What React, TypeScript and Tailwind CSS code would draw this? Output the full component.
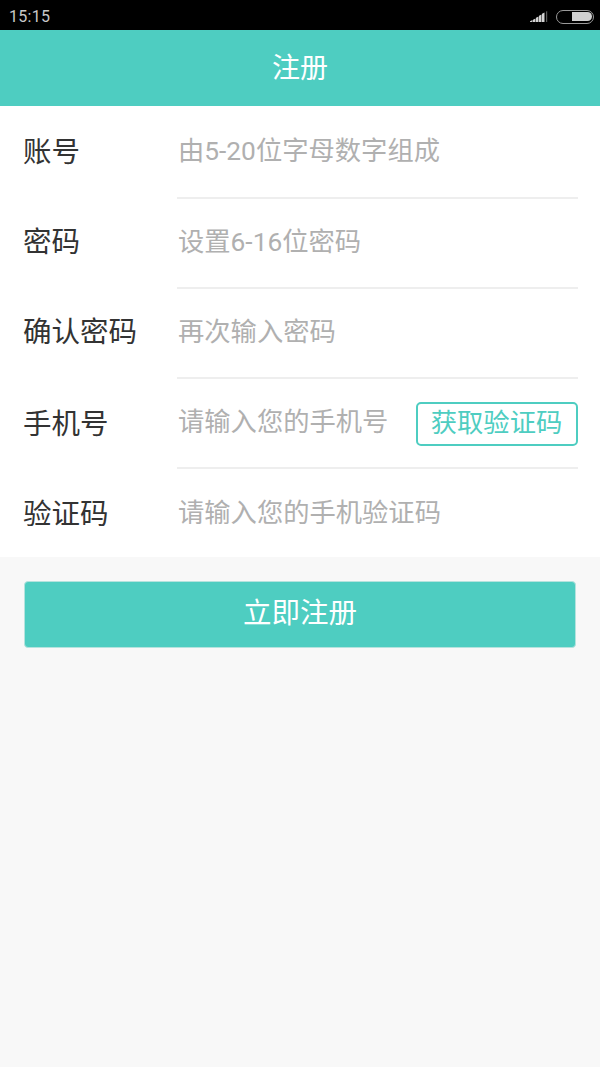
const font = "font-['Roboto','Noto_Sans_CJK_SC',sans-serif]";

const rows = [
  { label: '账号', labelClass: 'pt-[2px]', placeholder: '由5-20位字母数字组成', placeholderClass: '' },
  { label: '密码', labelClass: 'mb-[2px]', placeholder: '设置6-16位密码', placeholderClass: 'mb-[2px]' },
  { label: '确认密码', labelClass: 'mb-[2px]', placeholder: '再次输入密码', placeholderClass: 'mb-[2px]' },
  { label: '手机号', labelClass: 'pt-[2px]', placeholder: '请输入您的手机号', placeholderClass: 'mb-[2px]', code: true },
  { label: '验证码', labelClass: 'pt-[2px]', placeholder: '请输入您的手机验证码', placeholderClass: 'mb-[2px]' },
];

function StatusBar() {
  return (
    <div className="h-[30px] bg-black flex items-center justify-between pl-[9px] pr-[6px] pt-[3px]">
      <span className="text-[16px] text-[#c8c8c8] font-['Roboto',sans-serif] tracking-[0.3px]">15:15</span>
      <div className="flex items-center gap-[8px]">
        <svg width="18" height="13" viewBox="0 0 18 13">
          <path d="M0 12h2.500V10L0 11.200z M3 12h2.500V8.500L3 9.700z M6 12h2.500V6.500L6 7.700z M9 12h2.500V4.500L9 5.700z M12 12h2.500V2.500L12 3.700z" fill="#d4d4d4" />
          <path d="M16 12h1.200V1l-1.200.6z" fill="#5a5a5a" />
        </svg>
        <div className="w-[38px] h-[14px] rounded-full border-[1.5px] border-[#9a9a9a] p-[1.5px] flex justify-end">
          <div className="w-[20px] h-full bg-[#d2d2d2] rounded-r-full" />
        </div>
      </div>
    </div>
  );
}

export default function App() {
  return (
    <div className={`min-h-[1067px] bg-[#f8f8f8] ${font}`}>
      <StatusBar />
      <div className="h-[76px] pt-[2px] bg-[#4ecdc1] flex items-center justify-center text-white text-[28px] leading-none">
        注册
      </div>

      <div className="bg-white h-[451px] pl-[23px] pr-[22px]">
        {rows.map((row, i) => (
          <div key={row.label} className={`flex items-center ${i === 0 ? 'h-[93px]' : 'h-[90px]'}`}>
            <div className={`w-[154px] shrink-0 text-[28.5px] leading-none text-[#333333] ${row.labelClass}`}>
              {row.label}
            </div>
            <div
              className={`flex-1 h-full flex items-center pl-[1px] ${
                i < rows.length - 1 ? 'border-b-2 border-[#eeeeee]' : ''
              }`}
            >
              <span className={`flex-1 text-[26.3px] leading-none text-[#b0b0b0] ${row.placeholderClass}`}>
                {row.placeholder}
              </span>
              {row.code && (
                <button className="mt-[2px] pb-[2px] pr-[1px] w-[162px] h-[44px] border-2 border-[#4ecdc1] rounded-[5px] text-[26.3px] leading-none text-[#4ecdc1] flex items-center justify-center">
                  获取验证码
                </button>
              )}
            </div>
          </div>
        ))}
      </div>

      <div className="px-[24px] pt-[24px]">
        <button className="w-full h-[67px] pb-[1px] bg-[#4ecdc1] border border-[#b5e3de] rounded-[4px] text-white text-[28.5px] leading-none flex items-center justify-center">
          立即注册
        </button>
      </div>
    </div>
  );
}
